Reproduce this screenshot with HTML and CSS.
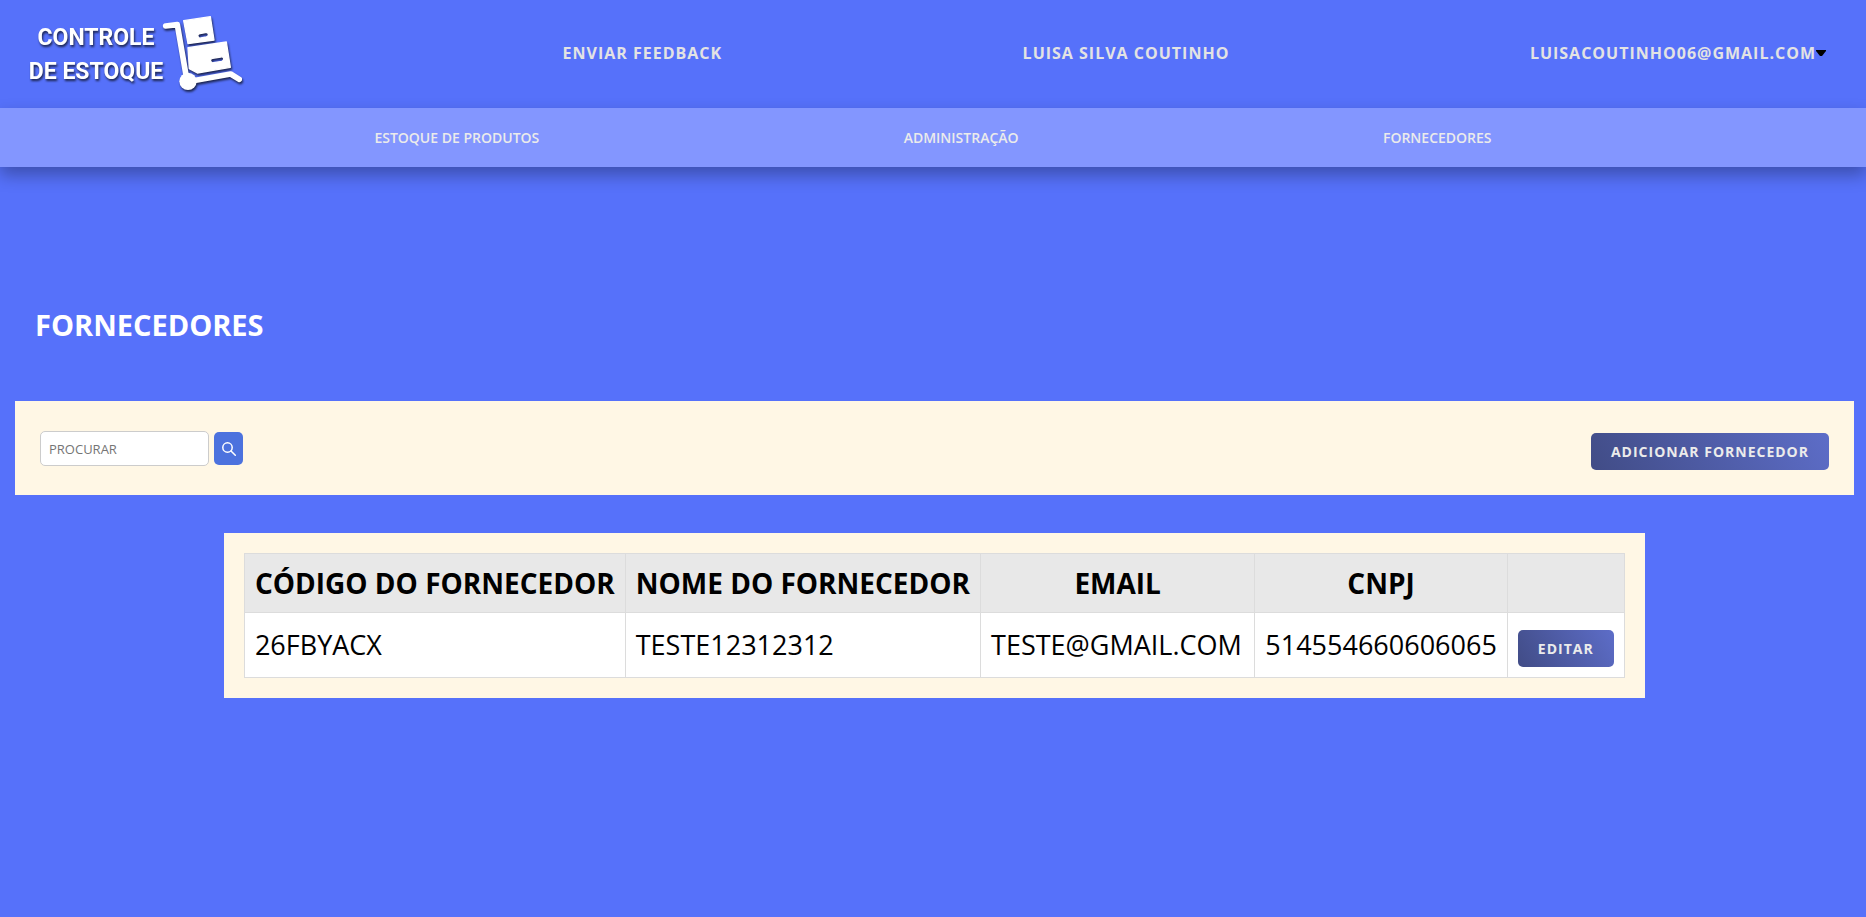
FILE: index.html
```html
<!DOCTYPE html>
<html lang="pt-BR">
<head>
  <meta charset="utf-8">
  <meta name="viewport" content="width=device-width, initial-scale=1">
  <title>Controle de Estoque - Fornecedores</title>
  <link rel="stylesheet" href="styles.css">
</head>
<body>
  <header class="topbar">
    <a class="logo" href="#" aria-label="Controle de Estoque">
      <span class="logo-text"><span>CONTROLE</span><span>DE ESTOQUE</span></span>
      <svg class="logo-icon" viewBox="486 42 240 228" aria-hidden="true">
        <g fill="#fff" stroke="#fff" stroke-linejoin="round" stroke-linecap="round">
          <path d="M497 75 532 71 558 222" fill="none" stroke-width="17"/>
          <path d="M575 240 692 219 718 235" fill="none" stroke-width="17"/>
          <circle cx="564" cy="241" r="26" stroke="none"/>
          <path fill-rule="evenodd" stroke-width="4" d="M551 59 631 47 642 117 564 128ZM600 98Q592 100 594 106Q596 113 603 111L619 108Q626 106 625 99Q623 93 616 95Z"/>
          <path fill-rule="evenodd" stroke-width="4" d="M564 140 679 123 691 199 592 216 568 203ZM638 172Q630 174 632 180Q634 187 641 185L665 181Q672 179 671 172Q669 166 662 168Z"/>
        </g>
      </svg>
    </a>
    <a class="top-link" href="#">ENVIAR FEEDBACK</a>
    <span class="top-link">LUISA SILVA COUTINHO</span>
    <button class="account" type="button">LUISACOUTINHO06@GMAIL.COM<svg class="caret" viewBox="0 0 10 6" aria-hidden="true"><path d="M0 0h10v1L6 6H4L0 1z"/></svg></button>
  </header>
  <nav class="menu">
    <a href="#">ESTOQUE DE PRODUTOS</a>
    <a href="#">ADMINISTRAÇÃO</a>
    <a href="#">FORNECEDORES</a>
  </nav>
  <main>
    <h1 class="title">FORNECEDORES</h1>
    <section class="toolbar">
      <form class="search">
        <input class="search-field" type="text" placeholder="PROCURAR" aria-label="Procurar">
        <button class="search-button" type="button" aria-label="Buscar">
          <svg viewBox="0 0 14 14" aria-hidden="true"><circle cx="5.500" cy="5.500" r="4.700"/><path d="m9 9 4.300 4.300"/></svg>
        </button>
      </form>
      <button class="button add-button" type="button">ADICIONAR FORNECEDOR</button>
    </section>
    <section class="list">
      <table class="suppliers">
        <colgroup><col class="c-code"><col class="c-name"><col class="c-email"><col class="c-cnpj"><col class="c-action"></colgroup>
        <thead>
          <tr><th>CÓDIGO DO FORNECEDOR</th><th>NOME DO FORNECEDOR</th><th>EMAIL</th><th>CNPJ</th><th></th></tr>
        </thead>
        <tbody>
          <tr><td>26FBYACX</td><td>TESTE12312312</td><td>TESTE@GMAIL.COM</td><td>514554660606065</td><td class="action"><button class="button" type="button">EDITAR</button></td></tr>
        </tbody>
      </table>
    </section>
  </main>
</body>
</html>
```
FILE: styles.css
```css
* { box-sizing: border-box; }

body {
  margin: 0;
  min-height: 100vh;
  background: #5671fa;
  font-family: "Open Sans", "Noto Sans", sans-serif;
  color: #000;
}

a { color: inherit; text-decoration: none; }

button { font-family: inherit; cursor: pointer; }

.topbar {
  display: flex;
  align-items: center;
  justify-content: space-between;
  height: 108px;
  padding: 0 40px 2px 30px;
}

.logo {
  display: flex;
  align-items: flex-start;
  width: 232px;
  color: #fff;
  filter: drop-shadow(1px 2px 1px #1c2550);
}

.logo-text {
  display: flex;
  flex-direction: column;
  align-items: center;
  width: 132px;
  padding-top: 6px;
  font: bold 23px/34px Roboto, "Liberation Sans", sans-serif;
  white-space: nowrap;
}

.logo-icon { width: 80px; height: 76px; }

.top-link,
.account {
  font-size: 16px;
  font-weight: 700;
  letter-spacing: 1px;
  color: #e3e3e3;
}

.account {
  display: flex;
  align-items: center;
  padding: 0;
  border: 0;
  background: none;
}

.caret { width: 10px; height: 6px; fill: #000; }

.menu {
  display: flex;
  align-items: center;
  justify-content: space-evenly;
  height: 59px;
  padding: 0 10px;
  background: #8396ff;
  box-shadow: 0 8px 16px rgba(0, 0, 0, 0.3);
  color: #ebebeb;
  font-size: 14px;
  font-weight: 600;
}

.title {
  margin: 136px 35px 55px;
  font-size: 29px;
  line-height: 43px;
  color: #fff;
}

.toolbar {
  display: flex;
  align-items: flex-start;
  justify-content: space-between;
  margin: 0 12px 38px 15px;
  padding: 30px 25px 25px;
  background: #fff7e5;
}

.search { display: flex; align-items: center; gap: 5px; }

.search-field {
  width: 169px;
  height: 35px;
  padding: 0 8px;
  border: 1px solid #ccc;
  border-radius: 5px;
  background: #fff;
  font: 13px "Open Sans", "Noto Sans", sans-serif;
}

.search-field::placeholder { color: #757575; opacity: 1; }

.search-button {
  display: grid;
  place-items: center;
  width: 29px;
  height: 33px;
  padding: 0;
  border: 0;
  border-radius: 5px;
  background: #4c72de;
}

.search-button svg {
  width: 14px;
  height: 14px;
  fill: none;
  stroke: #fff;
  stroke-width: 1.5;
  stroke-linecap: round;
}

.button {
  height: 37px;
  padding: 0 20px;
  border: 0;
  border-radius: 5px;
  background: linear-gradient(60deg, #414c86, #5d6dc8);
  color: #ebebeb;
  font-size: 14px;
  font-weight: 700;
  letter-spacing: 1px;
  white-space: nowrap;
}

.add-button { margin-top: 2px; }

.list {
  margin: 0 11.85% 0 12%;
  padding: 20px;
  background: #fff7e5;
}

.suppliers {
  width: 100%;
  border-collapse: collapse;
  background: #fff;
  font-size: 28px;
  white-space: nowrap;
}

.suppliers th,
.suppliers td {
  padding: 10px;
  border: 1px solid #dcdcdc;
  line-height: 38px;
}

.suppliers th { background: #e8e8e8; font-weight: 700; }

.suppliers td { height: 65px; text-align: left; font-size: 27px; font-weight: 400; }

.suppliers .action { padding: 17px 10px 10px; line-height: 0; }

.c-code { width: 27.4%; }
.c-name { width: 25.7%; }
.c-email { width: 20.1%; }
.c-cnpj { width: 18.3%; }
.c-action { width: 8.5%; }
```
